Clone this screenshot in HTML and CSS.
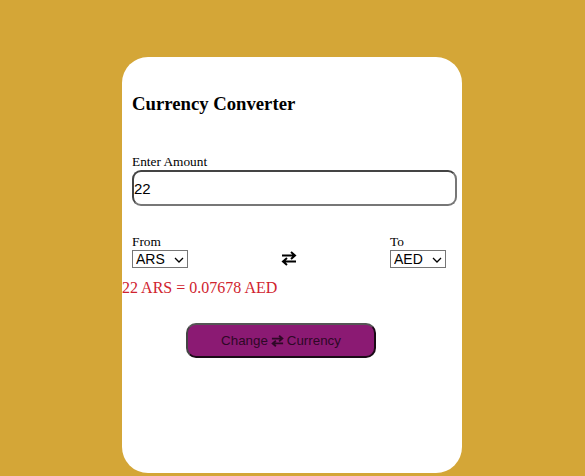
FILE: index.html
```html
<!DOCTYPE html>
<html>
<head>
<meta charset="utf-8">
<link rel="stylesheet" href="styles.css">
</head>
<body>
<div class="card">
  <h2 class="title">Currency Converter</h2>
  <div class="amount">
    <label class="lbl">Enter Amount</label>
    <input class="amount-input" type="text" value="22">
  </div>
  <div class="row">
    <div class="col">
      <label class="lbl">From</label>
      <select class="sel"><option>ARS</option></select>
    </div>
    <svg class="swap" width="16" height="15" viewBox="0 0 16 15">
      <path d="M1 4.5H14M10 1L14 4.5L10 8" fill="none" stroke="#000" stroke-width="2"/>
      <path d="M15 10.5H2M6 7L2 10.5L6 14" fill="none" stroke="#000" stroke-width="2"/>
    </svg>
    <div class="col">
      <label class="lbl">To</label>
      <select class="sel"><option>AED</option></select>
    </div>
  </div>
  <p class="result">22 ARS = 0.07678 AED</p>
  <div class="btn-wrap">
    <button class="btn">Change <svg class="btn-icon" width="13" height="12" viewBox="0 0 16 15"><path d="M1 4.5H14M10 1L14 4.5L10 8" fill="none" stroke="#2e0826" stroke-width="2.4"/><path d="M15 10.5H2M6 7L2 10.5L6 14" fill="none" stroke="#2e0826" stroke-width="2.4"/></svg> Currency</button>
  </div>
</div>
</body>
</html>
```
FILE: styles.css
```css
html, body {
  margin: 0;
  padding: 0;
}
body {
  background: #d4a637;
  height: 476px;
  overflow: hidden;
  font-family: "Liberation Serif", "Times New Roman", serif;
}
.card {
  width: 340px;
  height: 416px;
  margin: 57px 0 0 122px;
  background: #fff;
  border-radius: 26px;
  box-sizing: border-box;
  padding-top: 36px;
}
.title {
  margin: 0 0 0 10px;
  font-size: 18.72px;
  line-height: 22px;
  font-weight: bold;
  color: #000;
}
.amount {
  margin: 39px 5px 0 10px;
  display: flex;
  flex-direction: column;
}
.lbl {
  font-size: 13.33px;
  line-height: 15px;
  color: #000;
}
.amount-input {
  margin-top: 1px;
  height: 36px;
  box-sizing: border-box;
  border: 2px solid #444;
  border-right-color: #777;
  border-bottom-color: #777;
  border-radius: 9px;
  padding: 0;
  font-family: "Liberation Sans", Arial, sans-serif;
  font-size: 15px;
  color: #000;
  outline: none;
}
.row {
  margin: 29px 16px 0 10px;
  display: flex;
  justify-content: space-between;
  align-items: flex-end;
}
.col {
  display: flex;
  flex-direction: column;
  align-items: flex-start;
}
.col .lbl {
  margin-top: -1px;
  margin-bottom: 1px;
}
.sel {
  -webkit-appearance: none;
  appearance: none;
  width: 56px;
  height: 18px;
  margin: 0;
  font-family: "Liberation Sans", Arial, sans-serif;
  font-size: 14px;
  line-height: 16px;
  border: 1px solid #767676;
  border-radius: 0;
  background-color: #fff;
  background-image: url("data:image/svg+xml;utf8,<svg xmlns='http://www.w3.org/2000/svg' width='10' height='6' viewBox='0 0 10 6'><path d='M1 1L5 5L9 1' fill='none' stroke='%23000' stroke-width='1.3'/></svg>");
  background-repeat: no-repeat;
  background-position: 41px 6px;
  color: #000;
  padding: 0 0 0 3px;
}
.swap {
  display: block;
  margin-bottom: 2px;
}
.result {
  margin: 11px 0 0;
  font-size: 16px;
  line-height: 18px;
  color: #d0232e;
}
.btn-wrap {
  display: flex;
  margin-top: 26px;
  padding-left: 64px;
}
.btn {
  width: 190px;
  height: 35px;
  box-sizing: border-box;
  background: #8b1a73;
  border: 2px solid #1a0a16;
  border-top-color: #555;
  border-left-color: #444;
  border-radius: 10px;
  font-family: "Liberation Sans", Arial, sans-serif;
  font-size: 13.33px;
  color: #2e0826;
  display: flex;
  align-items: center;
  justify-content: center;
  padding: 0;
}
.btn-icon {
  margin: 0 3px;
}
```
